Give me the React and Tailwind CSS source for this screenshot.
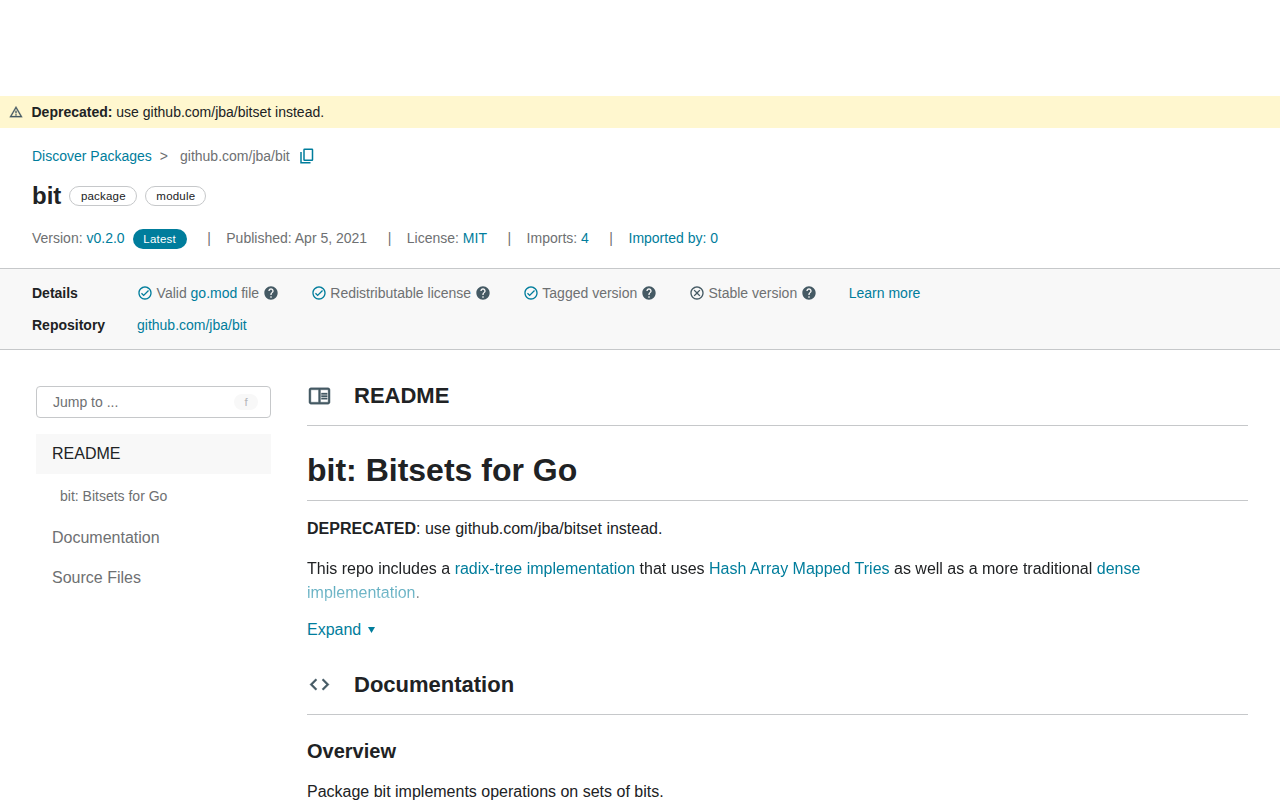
import React from "react";

function Icon({ d, className }) {
  return (
    <svg viewBox="0 0 24 24" fill="currentColor" className={"shrink-0 " + className} aria-hidden="true">
      <path d={d} />
    </svg>
  );
}

const ring = "M12 2C6.48 2 2 6.48 2 12s4.48 10 10 10 10-4.48 10-10S17.52 2 12 2zm0 18c-4.42 0-8-3.58-8-8s3.58-8 8-8 8 3.58 8 8-3.58 8-8 8z";
const paths = {
  warning: "M12 5.99L19.53 19H4.47L12 5.99M12 2L1 21h22L12 2zm1 14h-2v2h2v-2zm0-6h-2v4h2v-4z",
  check: "M16.59 7.58L10 14.17l-2.59-2.58L6 13l4 4 8-8z" + ring,
  cross: "M15.6 7L12 10.600 8.400 7 7 8.400 10.600 12 7 15.600 8.400 17 12 13.400 15.600 17 17 15.600 13.400 12 17 8.400z" + ring,
  help: "M12 2C6.48 2 2 6.48 2 12s4.48 10 10 10 10-4.48 10-10S17.52 2 12 2zm1 17h-2v-2h2v2zm2.07-7.75l-.9.92C13.45 12.9 13 13.5 13 15h-2v-.5c0-1.1.45-2.1 1.17-2.83l1.24-1.26c.37-.36.59-.86.59-1.41 0-1.1-.9-2-2-2s-2 .9-2 2H8c0-2.21 1.79-4 4-4s4 1.79 4 4c0 .88-.36 1.68-.93 2.25z",
  reader: "M21 4H3c-1.1 0-2 .9-2 2v13c0 1.1.9 2 2 2h18c1.1 0 2-.9 2-2V6c0-1.1-.9-2-2-2zM3 19V6h8v13H3zm18 0h-8V6h8v13zm-7-9.500h6V11h-6zm0 2.500h6v1.500h-6zm0 2.500h6V16h-6z",
  code: "M9.400 16.600L4.800 12l4.600-4.600L8 6l-6 6 6 6 1.400-1.400zm5.200 0l4.600-4.600-4.600-4.600L16 6l6 6-6 6-1.400-1.400z",
};

function CopyIcon({ className }) {
  return (
    <svg viewBox="0 0 14 16" fill="none" stroke="currentColor" strokeWidth="1.500" className={"shrink-0 " + className} aria-hidden="true">
      <rect x="4" y="1.250" width="8.500" height="11" rx="0.500" />
      <path d="M1 4v10.750h9.500" />
    </svg>
  );
}

function Link({ children }) {
  return <a className="text-[#007d9c]">{children}</a>;
}

function Divider() {
  return <span className="ml-[20.500px] mr-[15.500px] text-[#6e7072]">|</span>;
}

function Check({ icon = "check", children }) {
  return (
    <li className="mr-8 flex items-center">
      <Icon d={paths[icon]} className={icon === "check" ? "size-4 mr-[3.600px] text-[#007d9c]" : "size-4 mr-[3.600px] text-[#455a64]"} />
      <span>{children}</span>
      <Icon d={paths.help} className="ml-[3.600px] size-4 text-[#455a64]" />
    </li>
  );
}

function SectionTitle({ icon, children }) {
  return (
    <h2 className="flex h-[61px] items-center border-b border-[#c6c8ca] text-[22px] font-bold">
      <Icon d={paths[icon]} className="ml-px mr-[23px] size-[23px] stroke-current stroke-[0.4px] text-[#455a64]" />
      {children}
    </h2>
  );
}

export default function App() {
  return (
    <div className="h-[800px] w-[1280px] overflow-hidden bg-white pt-24 font-['Liberation_Sans',Arial,sans-serif] text-sm text-[#202224]">
      <div className="flex h-8 items-center bg-[#fff7cf] pl-[9px]">
        <Icon d={paths.warning} className="mb-px mr-[8.500px] size-[14px] stroke-current stroke-[0.4px] text-[#455a64]" />
        <p><strong>Deprecated:</strong> use github.com/jba/bitset instead.</p>
      </div>

      <header className="h-[141px] border-b border-[#c6c8ca] px-8 pt-4 text-[#6e7072]">
        <nav className="flex h-6 items-center">
          <Link>Discover Packages</Link>
          <span className="ml-2 mr-3">&gt;</span>
          <span>github.com/jba/bit</span>
          <CopyIcon className="ml-[10.300px] h-4 w-[14px] text-[#007d9c]" />
        </nav>
        <div className="mt-3 flex h-8 items-center text-[#202224]">
          <h1 className="text-2xl font-bold">bit</h1>
          <span className="ml-2 flex h-5 w-[68px] items-center justify-center rounded-full border border-[#c6c8ca] text-[11.500px] tracking-[0.2px]">package</span>
          <span className="ml-2 flex h-5 w-[61px] items-center justify-center rounded-full border border-[#c6c8ca] text-[11.500px] tracking-[0.2px]">module</span>
        </div>
        <div className="mt-[14px] flex h-6 items-center whitespace-pre">
          <span>Version: <Link>v0.2.0</Link></span>
          <span className="ml-2 mt-[2px] flex h-5 w-[54px] items-center justify-center rounded-full bg-[#007d9c] text-[11.500px] tracking-[0.2px] text-white">Latest</span>
          <Divider />
          <span>Published: Apr 5, 2021</span>
          <Divider />
          <span>License: <Link>MIT</Link></span>
          <Divider />
          <span>Imports: <Link>4</Link></span>
          <Divider />
          <Link>Imported by: 0</Link>
        </div>
      </header>

      <section className="h-[81px] border-b border-[#c6c8ca] bg-[#f8f8f8] px-8 pt-2 text-[#6e7072]">
        <div className="flex h-8 items-center">
          <strong className="w-[105px] text-[#202224]">Details</strong>
          <ul className="flex items-center">
            <Check>Valid <Link>go.mod</Link> file</Check>
            <Check>Redistributable license</Check>
            <Check>Tagged version</Check>
            <Check icon="cross">Stable version</Check>
            <li><Link>Learn more</Link></li>
          </ul>
        </div>
        <div className="flex h-8 items-center">
          <strong className="w-[105px] text-[#202224]">Repository</strong>
          <Link>github.com/jba/bit</Link>
        </div>
      </section>

      <div className="flex pl-9 pr-8">
        <aside className="mr-9 w-[235px] shrink-0 pt-9 text-[#6e7072]">
          <div className="flex h-8 items-center justify-between rounded border border-[#c6c8ca] pl-4 pr-3">
            <span>Jump to ...</span>
            <kbd className="flex h-4 w-6 items-center justify-center rounded-full bg-[#f8f8f8] pt-px font-['Liberation_Sans',Arial,sans-serif] text-[11.500px] text-[#b4b6b8]">f</kbd>
          </div>
          <nav className="mt-4 text-base">
            <div className="flex h-10 items-center bg-[#f8f8f8] pl-4 text-[#202224]">README</div>
            <div className="flex h-11 items-center pl-6 text-sm">bit: Bitsets for Go</div>
            <div className="flex h-10 items-center pl-4">Documentation</div>
            <div className="flex h-10 items-center pl-4">Source Files</div>
          </nav>
        </aside>

        <main className="min-w-0 flex-1 pt-[15px] text-base">
          <SectionTitle icon="reader">README</SectionTitle>
          <article>
            <h1 className="mt-6 h-[51px] border-b border-[#c6c8ca] text-[32px] leading-10 font-bold">bit: Bitsets for Go</h1>
            <p className="mt-4"><strong>DEPRECATED</strong>: use github.com/jba/bitset instead.</p>
            <p className="mt-4 [mask-image:linear-gradient(#000_48%,rgba(0,0,0,0.68)_56%,rgba(0,0,0,0.42)_100%)]">
              This repo includes a <Link>radix-tree implementation</Link> that uses <Link>Hash Array Mapped Tries</Link> as well as a more traditional <Link>dense implementation</Link>.
            </p>
          </article>
          <button className="mt-[13px] flex h-6 items-center text-[#007d9c]">
            Expand
            <svg viewBox="0 0 7 6" className="ml-[6.500px] h-[6px] w-[7px] fill-current"><path d="M0 0h7L3.500 6z" /></svg>
          </button>
          <div className="mt-3">
            <SectionTitle icon="code">Documentation</SectionTitle>
          </div>
          <h3 className="mt-6 text-xl leading-6 font-bold">Overview</h3>
          <p className="mt-[17px]">Package bit implements operations on sets of bits.</p>
        </main>
      </div>
    </div>
  );
}
